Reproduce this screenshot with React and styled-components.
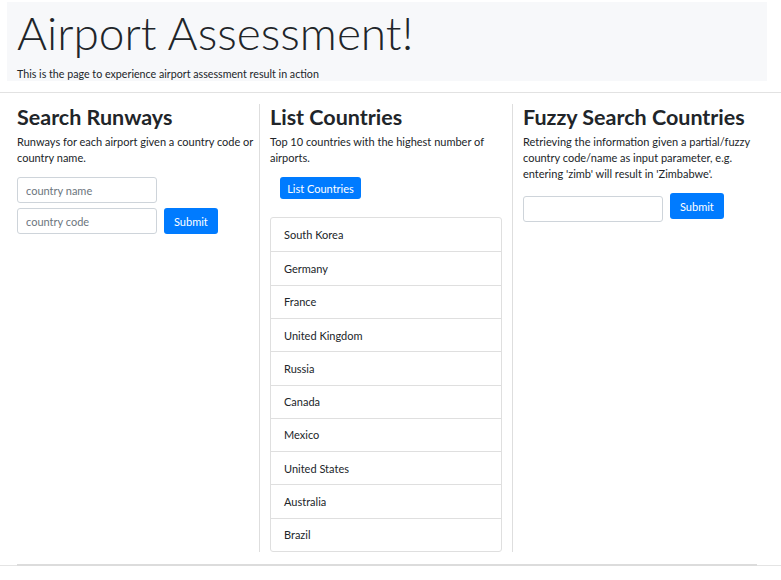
import React from 'react'
import styled, { createGlobalStyle } from 'styled-components'

const GlobalStyle = createGlobalStyle`
  body {
    margin: 0;
    background: #ffffff;
    font-family: Lato, "Open Sans", Arial, sans-serif;
    color: #212529;
  }
`

const countries = [
  'South Korea',
  'Germany',
  'France',
  'United Kingdom',
  'Russia',
  'Canada',
  'Mexico',
  'United States',
  'Australia',
  'Brazil'
]

const App = () => {
  return (
    <Page>
      <GlobalStyle />
      <Jumbotron>
        <Title>Airport Assessment!</Title>
        <Lead>This is the page to experience airport assessment result in action</Lead>
      </Jumbotron>
      <Rule />
      <Row>
        <Column>
          <Heading>Search Runways</Heading>
          <Text>Runways for each airport given a country code or country name.</Text>
          <FormStack>
            <Input placeholder="country name" />
            <InputRow>
              <Input placeholder="country code" />
              <Button>Submit</Button>
            </InputRow>
          </FormStack>
        </Column>
        <Column divided>
          <Heading>List Countries</Heading>
          <Text>Top 10 countries with the highest number of airports.</Text>
          <ListButton>List Countries</ListButton>
          <ListGroup>
            {countries.map((name, i) => (
              <ListItem key={i}>{name}</ListItem>
            ))}
          </ListGroup>
        </Column>
        <Column divided>
          <Heading>Fuzzy Search Countries</Heading>
          <Text>Retrieving the information given a partial/fuzzy country code/name as input parameter, e.g. entering 'zimb' will result in 'Zimbabwe'.</Text>
          <FuzzyRow>
            <Input />
            <Button raised>Submit</Button>
          </FuzzyRow>
        </Column>
      </Row>
      <Footer>
        <FooterInner />
      </Footer>
    </Page>
  )
}

const Page = styled.div`
  width: 781px;
  padding-top: 2px;
`

const Jumbotron = styled.div`
  margin: 0 14px 0 7px;
  height: 79px;
  background: #f7f8fa;
  padding: 0 10px;
  box-sizing: border-box;
  display: flex;
  flex-direction: column;
`

const Title = styled.h1`
  margin: 0;
  font-size: 46px;
  font-weight: 300;
  line-height: 62px;
  color: #212529;
`

const Lead = styled.p`
  margin: 3px 0 0;
  font-size: 10.7px;
  line-height: 14px;
  color: #212529;
`

const Rule = styled.div`
  margin-top: 11px;
  height: 1px;
  background: #e2e2e2;
`

const Row = styled.div`
  display: grid;
  grid-template-columns: 253px 253px 253px;
  margin: 11px 0 0 6px;
`

const Column = styled.div`
  border-left: ${props => (props.divided ? '1px solid #dedede' : 'none')};
  padding: 0 5px 0 ${props => (props.divided ? '10px' : '11px')};
  display: flex;
  flex-direction: column;
  align-items: flex-start;
  height: 448px;
`

const Heading = styled.h3`
  margin: 0;
  font-size: 21.5px;
  font-weight: 700;
  line-height: 26px;
  color: #212529;
`

const Text = styled.p`
  margin: 4px 0 0;
  font-size: 11px;
  line-height: 16px;
  color: #212529;
`

const FormStack = styled.div`
  margin-top: 11px;
  display: flex;
  flex-direction: column;
  gap: 5px;
`

const InputRow = styled.div`
  display: flex;
  align-items: center;
  gap: 7px;
`

const FuzzyRow = styled.div`
  margin-top: 14px;
  display: flex;
  align-items: flex-start;
  gap: 7px;
`

const Input = styled.input`
  width: 140px;
  height: 26px;
  box-sizing: border-box;
  border: 1px solid #ced4da;
  border-radius: 3px;
  padding: 0 8px;
  font-family: inherit;
  font-size: 11px;
  color: #495057;
  background: #fff;
  outline: none;

  &::placeholder {
    color: #6c757d;
  }
`

const Button = styled.button`
  height: 26px;
  padding: 0 10px;
  border: none;
  border-radius: 3px;
  background: #007bff;
  color: #ffffff;
  font-family: inherit;
  font-size: 11px;
  margin-top: ${props => (props.raised ? '-3px' : '0')};
  cursor: pointer;
`

const ListButton = styled(Button)`
  margin: 11px 0 0 10px;
  width: 81px;
  height: 26px;
  padding: 0;
`

const ListGroup = styled.ul`
  list-style: none;
  margin: 18px 0 0;
  padding: 0;
  width: 232px;
  border: 1px solid #dfdfdf;
  border-radius: 3px;
  box-sizing: border-box;
`

const ListItem = styled.li`
  height: 33.3px;
  box-sizing: border-box;
  padding: 0 13px;
  display: flex;
  align-items: center;
  font-size: 11px;
  color: #212529;
  border-top: 1px solid #dfdfdf;

  &:first-child {
    border-top: none;
  }
`

const Footer = styled.div`
  margin-top: 13px;
  height: 1px;
  background: #e4e4e4;
  position: relative;
`

const FooterInner = styled.div`
  position: absolute;
  left: 17px;
  top: -1px;
  width: 740px;
  height: 2px;
  background: #dcdcdc;
`

export default App
